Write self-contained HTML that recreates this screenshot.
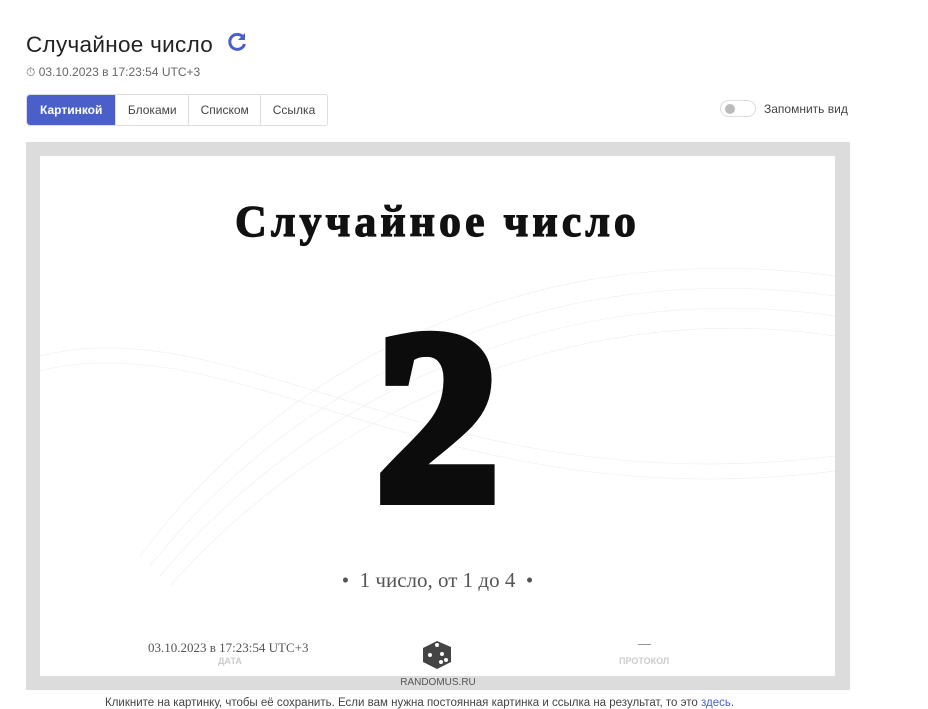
<!DOCTYPE html>
<html><head><meta charset="utf-8"><style>
body{margin:0;width:928px;height:708px;background:#fff;font-family:"Liberation Sans","DejaVu Sans",sans-serif;position:relative;overflow:hidden}
.a{position:absolute}
h1{position:absolute;left:26px;top:31px;margin:0;font-weight:normal;font-size:22.5px;color:#222;letter-spacing:0.3px}
.date{left:26px;top:65px;font-size:12px;color:#666}
.tabs{left:26px;top:94px;height:30px;display:flex;border:1px solid #ddd;border-radius:3px;font-size:12px;color:#444}
.tabs div{padding:0 11.5px;line-height:30px;border-left:1px solid #ddd}
.tabs div:first-child{background:#4a5fc9;color:#fff;border:none;border-radius:3px 0 0 3px;padding:0 13px;font-weight:bold}
.sw{left:720px;top:100px;width:34px;height:15px;border:1px solid #ddd;border-radius:9px}
.sw:after{content:"";position:absolute;left:4px;top:3px;width:10px;height:10px;border-radius:50%;background:#bbb}
.frame{left:26px;top:142px;width:824px;height:548px;background:#dcdcdc}
.inner{left:40px;top:156px;width:795px;height:520px;background:#fff;overflow:hidden}
.serif{font-family:"Liberation Serif","DejaVu Serif",serif}
</style></head><body>
<h1>Случайное число <svg width="22" height="22" viewBox="0 0 22 22" style="vertical-align:-1px;margin-left:6px"><path d="M17 6A7.5 7.5 0 1 0 18.5 13" fill="none" stroke="#4a5fc9" stroke-width="3"/><path d="M19 2v7h-7z" fill="#4a5fc9"/></svg></h1>
<div class="a date">⏱ 03.10.2023 в 17:23:54 UTC+3</div>
<div class="a tabs"><div>Картинкой</div><div>Блоками</div><div>Списком</div><div>Ссылка</div></div>
<div class="a sw"></div>
<div class="a" style="left:764px;top:102px;font-size:12px;color:#444">Запомнить вид</div>
<div class="a frame"></div>
<div class="a inner">
<svg class="a" style="left:0;top:0" width="795" height="520"><g fill="none" stroke="#f0f0f0" stroke-width="0.7">
<path d="M100 400C250 200 500 80 795 120"/><path d="M110 410C260 220 510 100 795 140"/><path d="M120 420C270 240 520 120 795 160"/><path d="M130 430C280 260 530 140 795 180"/><path d="M0 200C200 150 400 350 795 300"/><path d="M0 215C200 165 400 365 795 315"/></g></svg>
<div class="a serif" style="left:0;width:795px;top:40px;text-align:center;font-weight:bold;font-size:44px;letter-spacing:4px;color:#111;-webkit-text-stroke:1.2px #111">Случайное число</div>
<div class="a serif" style="left:0;width:795px;top:140px;text-align:center;font-weight:bold;font-size:242px;line-height:242px;color:#0c0c0c;-webkit-text-stroke:14px #0c0c0c">2</div>
<div class="a serif" style="left:0;width:795px;top:412px;text-align:center;font-size:21px;color:#555">•&nbsp; 1 число, от 1 до 4 &nbsp;•</div>
<div class="a serif" style="left:108px;top:484px;font-size:13px;color:#555">03.10.2023 в 17:23:54 UTC+3</div>
<div class="a" style="left:178px;top:500px;font-size:9px;color:#ccc;font-weight:bold">ДАТА</div>
<div class="a" style="left:598px;top:480px;font-size:13px;color:#888">—</div>
<div class="a" style="left:579px;top:500px;font-size:9px;color:#ccc;font-weight:bold">ПРОТОКОЛ</div>
<svg class="a" style="left:380px;top:482px" width="34" height="32" viewBox="0 0 34 32"><path d="M3 10L17 3L31 9L31 24L17 31L3 24Z" fill="#444"/><circle cx="10" cy="17" r="2" fill="#fff"/><circle cx="22" cy="16" r="2" fill="#fff"/><circle cx="26" cy="22" r="2" fill="#fff"/><circle cx="21" cy="24" r="2" fill="#fff"/><circle cx="17" cy="7" r="2" fill="#fff"/></svg>
</div>
<div class="a" style="left:26px;width:824px;top:677px;text-align:center;font-size:10px;color:#555">RANDOMUS.RU</div>
<div class="a" style="left:105px;top:697px;font-size:11.5px;color:#444">Кликните на картинку, чтобы её сохранить. Если вам нужна постоянная картинка и ссылка на результат, то это <span style="color:#4a5fc9">здесь</span>.</div>
</body></html>
